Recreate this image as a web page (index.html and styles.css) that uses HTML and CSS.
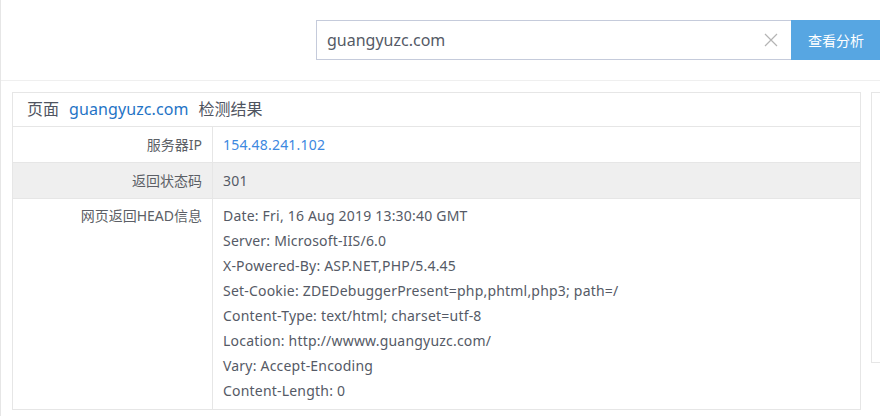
FILE: index.html
```html
<!DOCTYPE html>
<html lang="zh-CN">
<head>
<meta charset="utf-8">
<title>guangyuzc.com 检测结果</title>
<link rel="stylesheet" href="styles.css">
</head>
<body>
<div class="page">
  <header class="header">
    <div class="search">
      <div class="search-input">
        <span class="search-text">guangyuzc.com</span>
        <svg class="clear" width="14" height="14" viewBox="0 0 14 14"><path d="M1 1L13 13M13 1L1 13" stroke="#b4b4b4" stroke-width="1.2" fill="none"/></svg>
      </div>
      <button class="search-btn">查看分析</button>
    </div>
  </header>
  <main class="main">
    <section class="card">
      <div class="card-title">页面<a class="domain">guangyuzc.com</a>检测结果</div>
      <div class="row">
        <div class="label">服务器IP</div>
        <div class="value ip">154.48.241.102</div>
      </div>
      <div class="row row-grey">
        <div class="label">返回状态码</div>
        <div class="value">301</div>
      </div>
      <div class="row row-head">
        <div class="label">网页返回HEAD信息</div>
        <div class="value head-lines">
          <div>Date: Fri, 16 Aug 2019 13:30:40 GMT</div>
          <div>Server: Microsoft-IIS/6.0</div>
          <div>X-Powered-By: ASP.NET,PHP/5.4.45</div>
          <div>Set-Cookie: ZDEDebuggerPresent=php,phtml,php3; path=/</div>
          <div>Content-Type: text/html; charset=utf-8</div>
          <div>Location: http://wwww.guangyuzc.com/</div>
          <div>Vary: Accept-Encoding</div>
          <div>Content-Length: 0</div>
        </div>
      </div>
    </section>
    <aside class="side"></aside>
  </main>
</div>
</body>
</html>
```
FILE: styles.css
```css
* { box-sizing: border-box; }
html, body { margin: 0; padding: 0; background: #fff; }
body {
  font-family: "Noto Sans", "Noto Sans CJK SC", sans-serif;
  color: #555;
  width: 880px;
  height: 416px;
  overflow: hidden;
}
.page {
  border-left: 1px solid #e6e6e6;
  height: 416px;
}
.header {
  height: 81px;
  border-bottom: 1px solid #efefef;
  padding: 20px 0 0 315px;
}
.search {
  display: flex;
  height: 40px;
  width: 564px;
}
.search-input {
  width: 475px;
  height: 40px;
  border: 1px solid #c5cbdb;
  border-right: none;
  display: flex;
  align-items: center;
  padding: 0 13px 0 10px;
}
.search-text {
  flex: 1;
  font-size: 16px;
  color: #555a66;
}
.clear { display: block; }
.search-btn {
  width: 89px;
  height: 40px;
  border: none;
  background: #57a6e2;
  color: #fff;
  font-family: "Noto Sans CJK SC", sans-serif;
  font-size: 14px;
  padding: 0 0 0 1px;
}
.main {
  display: flex;
  gap: 10px;
  padding: 11px 0 0 11px;
  align-items: flex-start;
}
.card {
  flex: 0 0 849px;
  border: 1px solid #e6e6e6;
}
.card-title {
  height: 34px;
  border-bottom: 1px solid #e6e6e6;
  padding-left: 14px;
  font-size: 16px;
  line-height: 33px;
  color: #4f5460;
}
.domain {
  color: #1f74c6;
  margin: 0 10px;
  letter-spacing: 0.1px;
}
.row {
  display: flex;
  border-bottom: 1px solid #e6e6e6;
  font-size: 14px;
}
.row:last-child { border-bottom: none; }
.row-grey { background: #efefef; }
.label {
  flex: 0 0 200px;
  border-right: 1px solid #e6e6e6;
  text-align: right;
  padding-right: 10px;
  color: #5c5f66;
  line-height: 35px;
}
.value {
  padding-left: 10px;
  line-height: 35px;
  color: #555a66;
  letter-spacing: 0.2px;
}
.ip { color: #3d88df; }
.row-head .label,
.row-head .value {
  line-height: 25px;
  padding-top: 4px;
  padding-bottom: 6px;
}
.side {
  flex: 1 1 auto;
  min-width: 0;
  height: 271px;
  border: 1px solid #e6e6e6;
  border-right: none;
}
```
